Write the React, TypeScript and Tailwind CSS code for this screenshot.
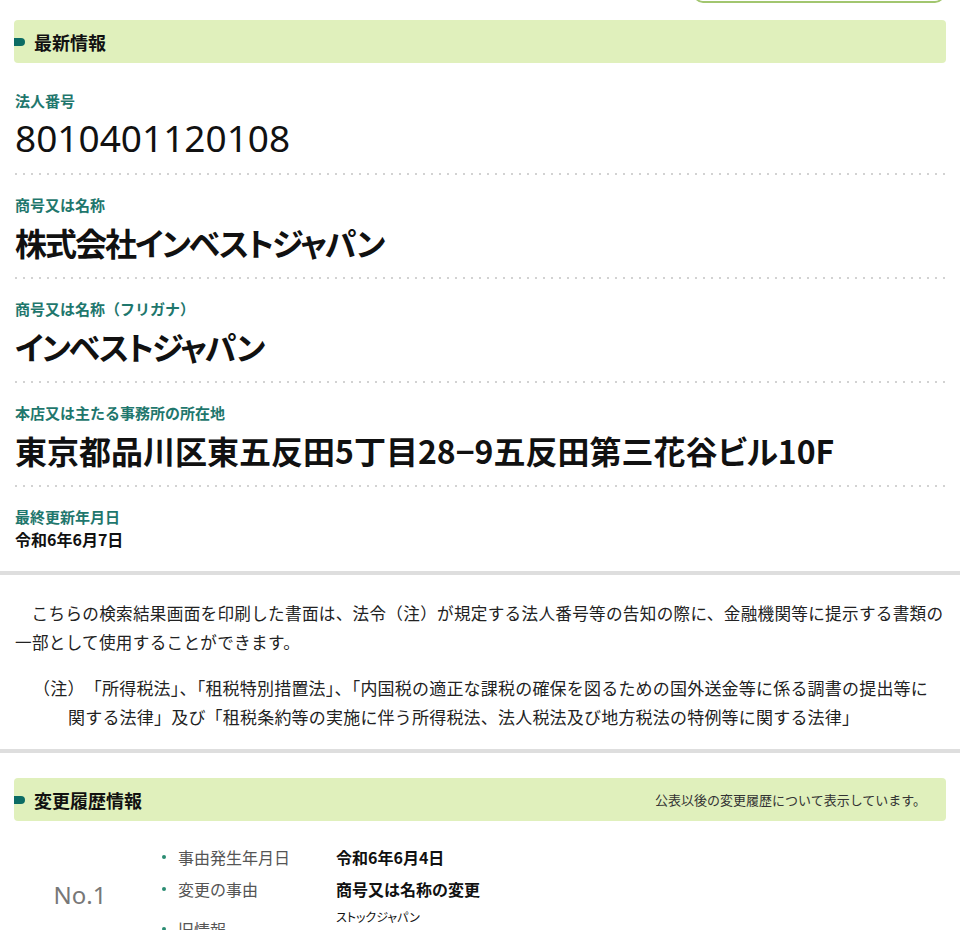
import React from "react";

const Dots = () => (
  <div className="mt-[13px] h-[2px] bg-[linear-gradient(to_right,#d2d2d2_2px,transparent_2px)] bg-[length:8px_2px] bg-repeat-x" />
);

const Label = ({ children }: { children: React.ReactNode }) => (
  <div className="text-[15px] leading-[20px] font-bold text-[#1f776d]">{children}</div>
);

const SectionHeader = ({ title, note }: { title: string; note?: string }) => (
  <div className="flex h-[43px] items-center rounded-[4px] bg-[#e0f0bc] pr-[20px]">
    <span className="h-[8px] w-[11px] rounded-r-full rounded-l-[2px] bg-[#0c6c64]" />
    <span className="ml-[9px] text-[18px] font-bold leading-none text-[#111]">{title}</span>
    {note && <span className="ml-auto text-[13px] text-[#333]">{note}</span>}
  </div>
);

export default function App() {
  const big = [
    { label: "商号又は名称", value: "株式会社インベストジャパン", tight: true },
    { label: "商号又は名称（フリガナ）", value: "インベストジャパン", tight: true },
    { label: "本店又は主たる事務所の所在地", value: "東京都品川区東五反田5丁目28−9五反田第三花谷ビル10F", tight: false },
  ];
  return (
    <div className="min-h-[930px] bg-white font-['Noto_Sans_CJK_JP',sans-serif] text-[#111]">
      {/* top button edge */}
      <div className="flex h-[3px] justify-end overflow-hidden px-[15px]">
        <div className="-mt-[37px] h-[40px] w-[252px] rounded-[10px] border-2 border-[#a2c66f] bg-white" />
      </div>

      <div className="px-[14px] pt-[17px]">
        <SectionHeader title="最新情報" />
        <div className="mt-[8px] px-[1px]">
          <div className="pt-[20px]">
            <Label>法人番号</Label>
            <div className="mt-[5px] h-[44px] font-['Noto_Sans',sans-serif] text-[37px] leading-[44px] text-[#111]">
              8010401120108
            </div>
            <Dots />
          </div>
          {big.map((f) => (
            <div key={f.label} className="pt-[20px]">
              <Label>{f.label}</Label>
              <div
                className={
                  f.tight
                    ? "mt-[5px] h-[44px] whitespace-nowrap text-[32px] font-bold leading-[44px] tracking-[-2px] text-[#111] [font-feature-settings:'palt']"
                    : "mt-[5px] h-[44px] whitespace-nowrap text-[32px] font-bold leading-[44px] text-[#111] [font-feature-settings:'palt']"
                }
              >
                {f.value}
              </div>
              <Dots />
            </div>
          ))}
          <div className="pt-[20px]">
            <Label>最終更新年月日</Label>
            <div className="mt-[1px] text-[16px] font-bold leading-[22px]">令和6年6月7日</div>
          </div>
        </div>
      </div>

      <div className="mt-[21px] h-[4px] bg-[#dedede]" />

      <div className="px-[15px] pt-[24px] pb-[18px] text-[16.6px] leading-[29px] text-[#222]">
        <p className="indent-[1em] tracking-[0.3px] whitespace-nowrap">
          こちらの検索結果画面を印刷した書面は、法令（注）が規定する法人番号等の告知の際に、金融機関等に提示する書類の
          <br />
          一部として使用することができます。
        </p>
        <p className="mt-[16px] whitespace-nowrap pl-[53px] -indent-[35px] text-[17px] tracking-[0.2px]">
          （注）　「所得税法」、「租税特別措置法」、「内国税の適正な課税の確保を図るための国外送金等に係る調書の提出等に
          <br />
          関する法律」及び「租税条約等の実施に伴う所得税法、法人税法及び地方税法の特例等に関する法律」
        </p>
      </div>

      <div className="h-[4px] bg-[#dedede]" />

      <div className="px-[14px] pt-[25px]">
        <SectionHeader title="変更履歴情報" note="公表以後の変更履歴について表示しています。" />
        <div className="mt-[20px] flex px-[1px]">
          <div className="flex w-[130px] items-center justify-center font-['Noto_Sans',sans-serif] text-[24px] text-[#777]">
            No.1
          </div>
          <div className="pl-[17px] text-[16px]">
            <div className="flex h-[32px] items-center">
              <span className="h-[4px] w-[4px] rounded-full bg-[#2a8c72]" />
              <span className="ml-[12px] w-[158px] text-[#555]">事由発生年月日</span>
              <span className="font-bold text-[#111]">令和6年6月4日</span>
            </div>
            <div className="flex h-[32px] items-center">
              <span className="h-[4px] w-[4px] rounded-full bg-[#2a8c72]" />
              <span className="ml-[12px] w-[158px] text-[#555]">変更の事由</span>
              <span className="font-bold text-[#111]">商号又は名称の変更</span>
            </div>
            <div className="flex items-center pt-[4px]">
              <span className="h-[4px] w-[4px] rounded-full bg-[#2a8c72]" />
              <span className="ml-[12px] w-[158px] text-[#555]">旧情報</span>
              <div>
                <div className="text-[12px] leading-[16px] text-[#111] [font-feature-settings:'palt']">ストックジャパン</div>
                <div className="text-[16px] font-bold leading-[24px] text-[#111]">株式会社ストックジャパン</div>
              </div>
            </div>
          </div>
        </div>
      </div>
    </div>
  );
}
